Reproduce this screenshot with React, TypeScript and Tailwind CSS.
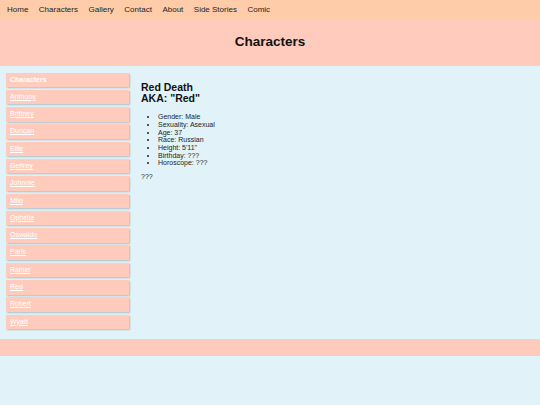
import React from "react";

const names = ["Anthony","Brittney","Duncan","Ellie","Geffrey","Johnnie","Milo","Ophelia","Oswaldo","Paris","Rainer","Red","Robert","Wyatt"];
const nav = ["Home","Characters","Gallery","Contact","About","Side Stories","Comic"];
const facts = ["Gender: Male","Sexuality: Asexual","Age: 37","Race: Russian","Height: 5'11\"","Birthday: ???","Horoscope: ???"];

export default function App() {
  return (
    <div className="min-h-[405px] bg-[#e1f3f8] font-['Liberation_Sans',Arial,sans-serif] text-[#111]">
      <nav className="h-[19px] bg-[#ffcca9] flex items-center pl-[7px] gap-[10.5px] text-[8px] text-[#222]">
        {nav.map((n) => (
          <span key={n}>{n}</span>
        ))}
      </nav>
      <header className="h-[47px] bg-[#ffcbbd] flex items-center justify-center">
        <h1 className="text-[13.5px] font-bold text-[#111]">Characters</h1>
      </header>
      <div className="flex pt-[6.5px]">
        <aside className="ml-[6px] w-[123px] flex flex-col gap-[2.8px]">
          <div className="h-[14.5px] bg-[#ffcbbd] shadow-[1px_1px_1.5px_rgba(0,0,0,0.22)] text-white font-bold text-[7px] flex items-center pl-[4px]">
            Characters
          </div>
          {names.map((n) => (
            <div key={n} className="h-[14.5px] bg-[#ffcbbd] shadow-[1px_1px_1.5px_rgba(0,0,0,0.22)] text-white text-[7px] flex items-center pl-[4px]">
              <span className="underline">{n}</span>
            </div>
          ))}
        </aside>
        <main className="ml-[12px] pt-[9px]">
          <h2 className="text-[10.5px] font-bold leading-[11.7px] text-[#111]">Red Death<br />AKA: "Red"</h2>
          <ul className="mt-[8.5px] pl-[17px] list-disc text-[7px] leading-[7.65px] text-[#222]">
            {facts.map((f) => (
              <li key={f}>{f}</li>
            ))}
          </ul>
          <p className="mt-[5px] text-[7px] text-[#222]">???</p>
        </main>
      </div>
      <footer className="mt-[10px] h-[17px] bg-[#ffcbbd]" />
    </div>
  );
}
